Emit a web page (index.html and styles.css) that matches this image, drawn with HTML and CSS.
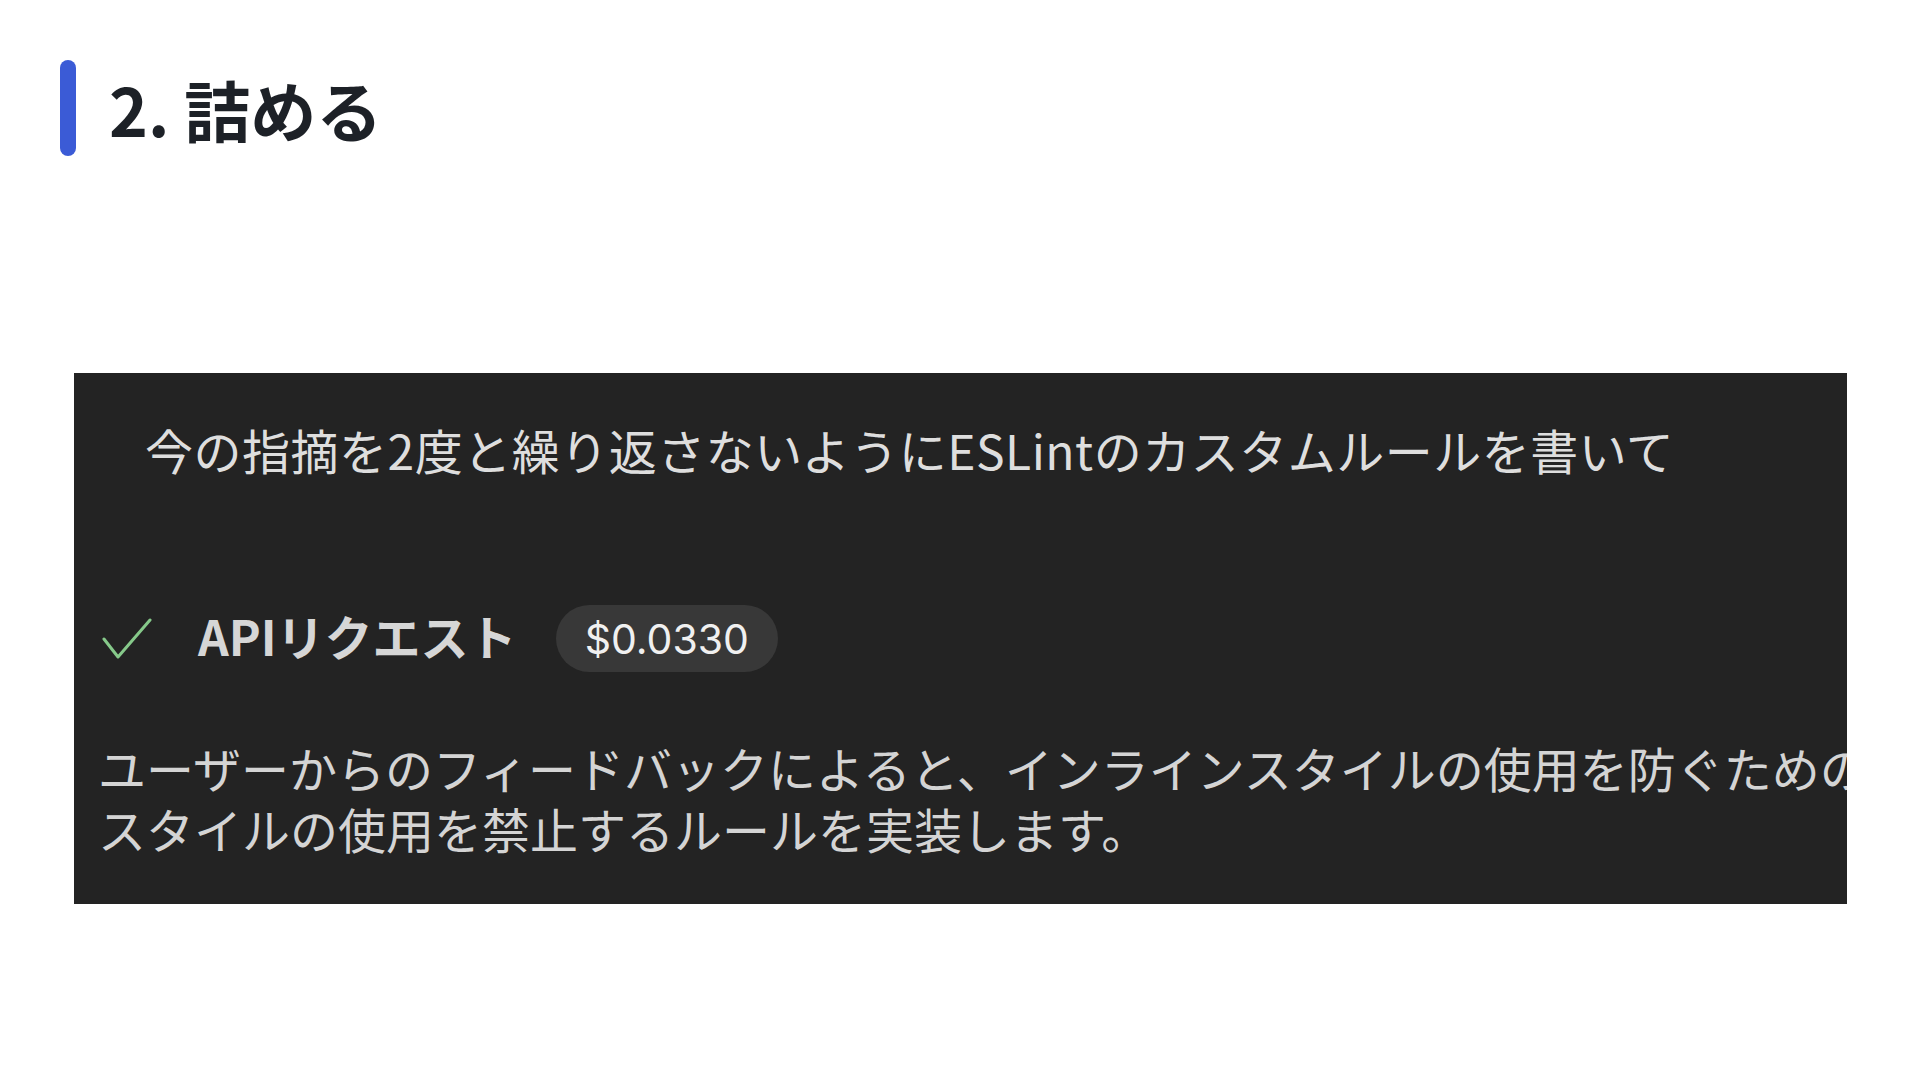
FILE: index.html
```html
<!DOCTYPE html>
<html lang="ja">
<head>
<meta charset="utf-8">
<title>2. 詰める</title>
<link rel="stylesheet" href="styles.css">
</head>
<body>
<div class="slide">
  <header class="title">
    <span class="title-bar"></span>
    <h1 class="title-text">2. 詰める</h1>
  </header>
  <section class="shot">
    <p class="prompt">今の指摘を2度と繰り返さないようにESLintのカスタムルールを書いて</p>
    <div class="status">
      <svg class="check" width="52" height="44" viewBox="0 0 52 44" aria-hidden="true">
        <polyline points="2,22 16,40 48,3" fill="none" stroke="#86c98a" stroke-width="3" stroke-linecap="round" stroke-linejoin="round"/>
      </svg>
      <span class="status-label">APIリクエスト</span>
      <span class="cost">$0.0330</span>
    </div>
    <p class="reply"><span class="reply-line">ユーザーからのフィードバックによると、インラインスタイルの使用を防ぐためのインライン</span><span class="reply-line">スタイルの使用を禁止するルールを実装します。</span></p>
  </section>
</div>
</body>
</html>
```
FILE: styles.css
```css
html, body {
  margin: 0;
  padding: 0;
  background: #ffffff;
}

.slide {
  width: 1920px;
  height: 1080px;
  box-sizing: border-box;
  padding: 60px 0 0 60px;
  font-family: "Noto Sans CJK JP", "Noto Sans", sans-serif;
}

.title {
  display: flex;
  align-items: center;
  gap: 33px;
  height: 96px;
}

.title-bar {
  width: 16px;
  height: 96px;
  border-radius: 8px;
  background: #3b5bd6;
}

.title-text {
  margin: 0;
  font-size: 66px;
  font-weight: 700;
  line-height: 96px;
  color: #1d2127;
}

.shot {
  margin: 217px 0 0 14px;
  width: 1773px;
  height: 531px;
  background: #232323;
  overflow: hidden;
  box-sizing: border-box;
  padding-top: 40px;
}

.prompt {
  margin: 0;
  padding-left: 71px;
  font-size: 48px;
  font-weight: 400;
  line-height: 72px;
  letter-spacing: 0.5px;
  color: #dedede;
  white-space: nowrap;
}

.status {
  display: flex;
  align-items: center;
  height: 67px;
  margin-top: 120px;
  padding-left: 28px;
}

.check {
  display: block;
  margin-right: 44px;
}

.status-label {
  font-size: 48px;
  font-weight: 700;
  line-height: 1.2;
  color: #d6d6d6;
  margin-right: 39px;
  padding-bottom: 6px;
}

.cost {
  display: flex;
  align-items: center;
  height: 67px;
  padding: 0 29px;
  border-radius: 34px;
  background: #383838;
  font-family: Inter, "Liberation Sans", sans-serif;
  font-size: 41px;
  color: #f0f0f0;
}

.reply {
  margin: 65px 0 0 0;
  padding-left: 24px;
  font-size: 48px;
  line-height: 61px;
  color: #d4d4d4;
}

.reply-line {
  display: block;
  white-space: nowrap;
}
```
